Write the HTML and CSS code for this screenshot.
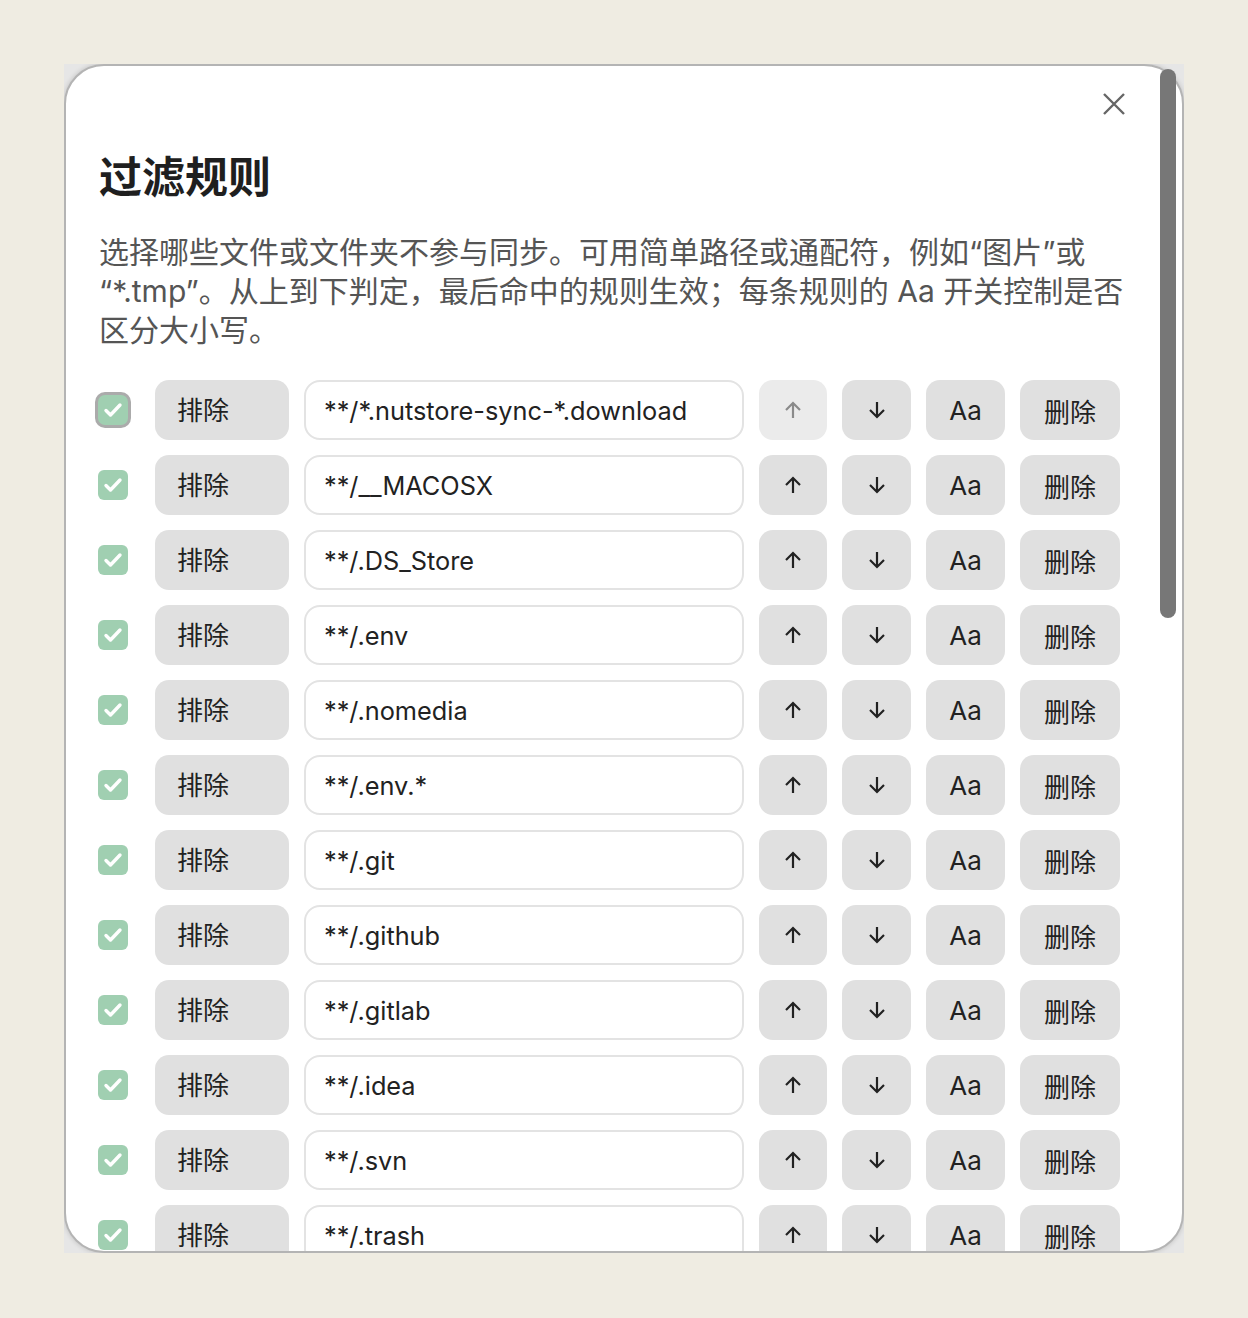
FILE: index.html
```html
<!DOCTYPE html>
<html lang="zh-CN">
<head>
    <meta charset="UTF-8">
    <meta name="viewport" content="width=device-width, initial-scale=1.0">
    <title>过滤规则</title>
    <link rel="stylesheet" href="styles.css">
</head>
<body>

    <div class="frame">
        <div class="dialog">
            <div class="dialog-head">
                <button class="close" aria-label="关闭">
                    <svg width="24" height="24" viewBox="0 0 24 24"><path d="M2 2L22 22M22 2L2 22"/></svg>
                </button>
            </div>

            <h1 class="title">过滤规则</h1>
            <p class="desc">选择哪些文件或文件夹不参与同步。可用简单路径或通配符，例如“图片”或“*.tmp”。从上到下判定，最后命中的规则生效；每条规则的 Aa 开关控制是否区分大小写。</p>

            <div class="rules">
                <div class="rule">
                    <span class="check focus"><svg width="30" height="30" viewBox="0 0 30 30"><path d="M8 15.5l4.5 4.5 9.5-10"/></svg></span>
                    <select class="mode"><option>排除</option><option>包含</option></select>
                    <input class="pattern" type="text" value="**/*.nutstore-sync-*.download">
                    <button class="btn up" disabled><svg width="18" height="18" viewBox="0 0 18 18"><path d="M9 17V2M2 9l7-7 7 7"/></svg></button>
                    <button class="btn down"><svg width="18" height="18" viewBox="0 0 18 18"><path d="M9 1v15M2 9l7 7 7-7"/></svg></button>
                    <button class="btn case">Aa</button>
                    <button class="btn del">删除</button>
                </div>
                <div class="rule">
                    <span class="check"><svg width="30" height="30" viewBox="0 0 30 30"><path d="M8 15.5l4.5 4.5 9.5-10"/></svg></span>
                    <select class="mode"><option>排除</option><option>包含</option></select>
                    <input class="pattern" type="text" value="**/__MACOSX">
                    <button class="btn up"><svg width="18" height="18" viewBox="0 0 18 18"><path d="M9 17V2M2 9l7-7 7 7"/></svg></button>
                    <button class="btn down"><svg width="18" height="18" viewBox="0 0 18 18"><path d="M9 1v15M2 9l7 7 7-7"/></svg></button>
                    <button class="btn case">Aa</button>
                    <button class="btn del">删除</button>
                </div>
                <div class="rule">
                    <span class="check"><svg width="30" height="30" viewBox="0 0 30 30"><path d="M8 15.5l4.5 4.5 9.5-10"/></svg></span>
                    <select class="mode"><option>排除</option><option>包含</option></select>
                    <input class="pattern" type="text" value="**/.DS_Store">
                    <button class="btn up"><svg width="18" height="18" viewBox="0 0 18 18"><path d="M9 17V2M2 9l7-7 7 7"/></svg></button>
                    <button class="btn down"><svg width="18" height="18" viewBox="0 0 18 18"><path d="M9 1v15M2 9l7 7 7-7"/></svg></button>
                    <button class="btn case">Aa</button>
                    <button class="btn del">删除</button>
                </div>
                <div class="rule">
                    <span class="check"><svg width="30" height="30" viewBox="0 0 30 30"><path d="M8 15.5l4.5 4.5 9.5-10"/></svg></span>
                    <select class="mode"><option>排除</option><option>包含</option></select>
                    <input class="pattern" type="text" value="**/.env">
                    <button class="btn up"><svg width="18" height="18" viewBox="0 0 18 18"><path d="M9 17V2M2 9l7-7 7 7"/></svg></button>
                    <button class="btn down"><svg width="18" height="18" viewBox="0 0 18 18"><path d="M9 1v15M2 9l7 7 7-7"/></svg></button>
                    <button class="btn case">Aa</button>
                    <button class="btn del">删除</button>
                </div>
                <div class="rule">
                    <span class="check"><svg width="30" height="30" viewBox="0 0 30 30"><path d="M8 15.5l4.5 4.5 9.5-10"/></svg></span>
                    <select class="mode"><option>排除</option><option>包含</option></select>
                    <input class="pattern" type="text" value="**/.nomedia">
                    <button class="btn up"><svg width="18" height="18" viewBox="0 0 18 18"><path d="M9 17V2M2 9l7-7 7 7"/></svg></button>
                    <button class="btn down"><svg width="18" height="18" viewBox="0 0 18 18"><path d="M9 1v15M2 9l7 7 7-7"/></svg></button>
                    <button class="btn case">Aa</button>
                    <button class="btn del">删除</button>
                </div>
                <div class="rule">
                    <span class="check"><svg width="30" height="30" viewBox="0 0 30 30"><path d="M8 15.5l4.5 4.5 9.5-10"/></svg></span>
                    <select class="mode"><option>排除</option><option>包含</option></select>
                    <input class="pattern" type="text" value="**/.env.*">
                    <button class="btn up"><svg width="18" height="18" viewBox="0 0 18 18"><path d="M9 17V2M2 9l7-7 7 7"/></svg></button>
                    <button class="btn down"><svg width="18" height="18" viewBox="0 0 18 18"><path d="M9 1v15M2 9l7 7 7-7"/></svg></button>
                    <button class="btn case">Aa</button>
                    <button class="btn del">删除</button>
                </div>
                <div class="rule">
                    <span class="check"><svg width="30" height="30" viewBox="0 0 30 30"><path d="M8 15.5l4.5 4.5 9.5-10"/></svg></span>
                    <select class="mode"><option>排除</option><option>包含</option></select>
                    <input class="pattern" type="text" value="**/.git">
                    <button class="btn up"><svg width="18" height="18" viewBox="0 0 18 18"><path d="M9 17V2M2 9l7-7 7 7"/></svg></button>
                    <button class="btn down"><svg width="18" height="18" viewBox="0 0 18 18"><path d="M9 1v15M2 9l7 7 7-7"/></svg></button>
                    <button class="btn case">Aa</button>
                    <button class="btn del">删除</button>
                </div>
                <div class="rule">
                    <span class="check"><svg width="30" height="30" viewBox="0 0 30 30"><path d="M8 15.5l4.5 4.5 9.5-10"/></svg></span>
                    <select class="mode"><option>排除</option><option>包含</option></select>
                    <input class="pattern" type="text" value="**/.github">
                    <button class="btn up"><svg width="18" height="18" viewBox="0 0 18 18"><path d="M9 17V2M2 9l7-7 7 7"/></svg></button>
                    <button class="btn down"><svg width="18" height="18" viewBox="0 0 18 18"><path d="M9 1v15M2 9l7 7 7-7"/></svg></button>
                    <button class="btn case">Aa</button>
                    <button class="btn del">删除</button>
                </div>
                <div class="rule">
                    <span class="check"><svg width="30" height="30" viewBox="0 0 30 30"><path d="M8 15.5l4.5 4.5 9.5-10"/></svg></span>
                    <select class="mode"><option>排除</option><option>包含</option></select>
                    <input class="pattern" type="text" value="**/.gitlab">
                    <button class="btn up"><svg width="18" height="18" viewBox="0 0 18 18"><path d="M9 17V2M2 9l7-7 7 7"/></svg></button>
                    <button class="btn down"><svg width="18" height="18" viewBox="0 0 18 18"><path d="M9 1v15M2 9l7 7 7-7"/></svg></button>
                    <button class="btn case">Aa</button>
                    <button class="btn del">删除</button>
                </div>
                <div class="rule">
                    <span class="check"><svg width="30" height="30" viewBox="0 0 30 30"><path d="M8 15.5l4.5 4.5 9.5-10"/></svg></span>
                    <select class="mode"><option>排除</option><option>包含</option></select>
                    <input class="pattern" type="text" value="**/.idea">
                    <button class="btn up"><svg width="18" height="18" viewBox="0 0 18 18"><path d="M9 17V2M2 9l7-7 7 7"/></svg></button>
                    <button class="btn down"><svg width="18" height="18" viewBox="0 0 18 18"><path d="M9 1v15M2 9l7 7 7-7"/></svg></button>
                    <button class="btn case">Aa</button>
                    <button class="btn del">删除</button>
                </div>
                <div class="rule">
                    <span class="check"><svg width="30" height="30" viewBox="0 0 30 30"><path d="M8 15.5l4.5 4.5 9.5-10"/></svg></span>
                    <select class="mode"><option>排除</option><option>包含</option></select>
                    <input class="pattern" type="text" value="**/.svn">
                    <button class="btn up"><svg width="18" height="18" viewBox="0 0 18 18"><path d="M9 17V2M2 9l7-7 7 7"/></svg></button>
                    <button class="btn down"><svg width="18" height="18" viewBox="0 0 18 18"><path d="M9 1v15M2 9l7 7 7-7"/></svg></button>
                    <button class="btn case">Aa</button>
                    <button class="btn del">删除</button>
                </div>
                <div class="rule">
                    <span class="check"><svg width="30" height="30" viewBox="0 0 30 30"><path d="M8 15.5l4.5 4.5 9.5-10"/></svg></span>
                    <select class="mode"><option>排除</option><option>包含</option></select>
                    <input class="pattern" type="text" value="**/.trash">
                    <button class="btn up"><svg width="18" height="18" viewBox="0 0 18 18"><path d="M9 17V2M2 9l7-7 7 7"/></svg></button>
                    <button class="btn down"><svg width="18" height="18" viewBox="0 0 18 18"><path d="M9 1v15M2 9l7 7 7-7"/></svg></button>
                    <button class="btn case">Aa</button>
                    <button class="btn del">删除</button>
                </div>
            </div>
        </div>
        <div class="scroll-thumb"></div>
    </div>

</body>
</html>
```

FILE: styles.css
```css
body {
    margin: 0;
    padding: 64px;
    background: #efece2;
    font-family: Inter, "Noto Sans CJK SC", sans-serif;
    color: #222;
}
.frame {
    position: relative;
    width: 1120px;
    height: 1189px;
    background: #e6e6e6;
    overflow: hidden;
}
.dialog {
    box-sizing: border-box;
    height: 100%;
    padding: 16px 62px 0 33px;
    background: #fff;
    border: 2px solid #b4b4b4;
    border-radius: 40px;
    box-shadow: 0 0 5px rgba(0, 0, 0, 0.18);
    overflow: hidden;
}
.dialog-head {
    display: flex;
    justify-content: flex-end;
}
.close {
    width: 44px;
    height: 44px;
    margin-right: -16px;
    padding: 0;
    border: 0;
    background: none;
    display: flex;
    align-items: center;
    justify-content: center;
}
.close svg path {
    fill: none;
    stroke: #666;
    stroke-width: 2.4;
}
.title {
    margin: 25px 0 0;
    font-size: 43px;
    line-height: 52px;
    font-weight: 700;
    color: #1f1f1f;
}
.desc {
    margin: 30px -18px 0 0;
    font-size: 30px;
    line-height: 39px;
    color: #555;
}
.rules {
    margin-top: 30px;
    display: flex;
    flex-direction: column;
    gap: 15px;
}
.rule {
    display: flex;
    align-items: center;
    gap: 15px;
    height: 60px;
}
.check {
    width: 30px;
    height: 30px;
    margin: 0 12px 0 -1px;
    border-radius: 6px;
    background: #a0cfb1;
    flex: none;
}
.check.focus {
    box-shadow: 0 0 0 3px #ababab;
    border-radius: 7px;
}
.check svg {
    display: block;
}
.check svg path {
    fill: none;
    stroke: #fff;
    stroke-width: 3.4;
    stroke-linecap: round;
    stroke-linejoin: round;
}
.mode {
    appearance: none;
    width: 134px;
    height: 60px;
    padding: 0 22px;
    border: 0;
    border-radius: 14px;
    background: #e0e0e0;
    font: inherit;
    font-size: 26px;
    color: #222;
    flex: none;
}
.pattern {
    box-sizing: border-box;
    flex: 1;
    min-width: 0;
    height: 60px;
    padding: 0 17px 0 18px;
    border: 2px solid #e3e3e3;
    border-radius: 16px;
    font: inherit;
    font-size: 25.3px;
    color: #222;
    background: #fff;
}
.btn {
    height: 60px;
    padding: 0;
    border: 0;
    border-radius: 14px;
    background: #e0e0e0;
    font: inherit;
    font-size: 26px;
    color: #222;
    display: flex;
    align-items: center;
    justify-content: center;
    flex: none;
}
.btn svg path {
    fill: none;
    stroke: #222;
    stroke-width: 2.2;
}
.btn:disabled {
    background: #ebebeb;
}
.btn:disabled svg path {
    stroke: #8a8a8a;
}
.up { width: 68px; }
.down { width: 69px; }
.case { width: 79px; }
.del { width: 100px; }
.scroll-thumb {
    position: absolute;
    top: 5px;
    left: 1096px;
    width: 16px;
    height: 549px;
    border-radius: 8px;
    background: #777;
}
```
